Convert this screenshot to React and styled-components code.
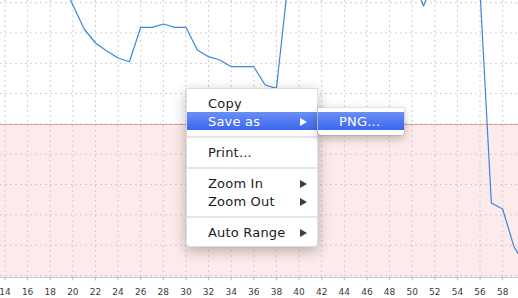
import React from 'react';
import styled, { createGlobalStyle } from 'styled-components';

const GlobalStyle = createGlobalStyle`
  html, body {
    margin: 0;
    padding: 0;
    background: #fff;
    overflow: hidden;
  }
`;

const W = 518;
const PLOT_BOTTOM = 277.5;
const BAND_TOP = 124;

const xOf = v => 5 + (v - 14) * 11.31;

// y values in screen pixels, index = x value
const series = [
  [19, -20], [20, 5], [21, 29], [22, 43], [23, 51], [24, 58], [25, 61.7],
  [26, 27.3], [27, 27.3], [28, 24], [29, 27.3], [30, 27.3], [31, 50],
  [32, 56.7], [33, 60], [34, 66.7], [35, 66.7], [36, 66.7], [37, 85],
  [38, 88.3], [39, -15], [40, -40], [45, -60], [50, -25], [51, 6],
  [52, -22], [54, -40], [55, -30], [56, -9.4], [57, 203], [58, 209],
  [59, 246.7], [60, 265],
];

const ticks = [];
for (let v = 14; v <= 60; v += 2) ticks.push(v);

const rows = [];
for (let k = 0; k < 10; k += 1) rows.push(2.7 + 30.3 * k);

const Frame = styled.div`
  position: relative;
  width: ${W}px;
  height: 298px;
  overflow: hidden;
  font-family: "DejaVu Sans", "Liberation Sans", sans-serif;
`;

const ChartSvg = styled.svg`
  display: block;
`;

const Chart = () => (
  <ChartSvg width={W} height={298} viewBox={`0 0 ${W} 298`}>
    <rect x="0" y={BAND_TOP} width={W} height={PLOT_BOTTOM - BAND_TOP} fill="#fdeaea" />
    {rows.map(y => (
      <line key={y} x1="0" x2={W} y1={y} y2={y} stroke="#cfcfcf" strokeWidth="1" strokeDasharray="2 3" />
    ))}
    {ticks.map(v => (
      <line key={v} x1={xOf(v)} x2={xOf(v)} y1="0" y2={PLOT_BOTTOM} stroke="#cfcfcf" strokeWidth="1" strokeDasharray="2 3" />
    ))}
    <line x1="0" x2={W} y1={BAND_TOP + 0.5} y2={BAND_TOP + 0.5} stroke="#d6a6a6" strokeWidth="1.2" />
    <polyline
      points={series.map(([v, y]) => `${xOf(v)},${y}`).join(' ')}
      fill="none"
      stroke="#3b86d8"
      strokeWidth="1.2"
      strokeLinejoin="round"
    />
    <line x1="0" x2={W} y1={PLOT_BOTTOM} y2={PLOT_BOTTOM} stroke="#c8c8c8" strokeWidth="1" />
    {ticks.filter(v => xOf(v) < W).map(v => (
      <g key={`t${v}`}>
        <line x1={xOf(v)} x2={xOf(v)} y1={PLOT_BOTTOM} y2={PLOT_BOTTOM + 3} stroke="#bbb" strokeWidth="1" />
        <text
          x={xOf(v)}
          y="295"
          textAnchor="middle"
          fontFamily="DejaVu Sans, sans-serif"
          fontSize="9"
          fill="#3a3a3a"
        >
          {v}
        </text>
      </g>
    ))}
  </ChartSvg>
);

const Menu = styled.ul`
  position: absolute;
  left: 186px;
  top: 88px;
  width: 130px;
  margin: 0;
  padding: 5px 0 5px;
  list-style: none;
  background: #fff;
  border: 1px solid rgba(0, 0, 0, 0.13);
  border-radius: 0 0 4px 4px;
  box-shadow: 0 4px 14px rgba(0, 0, 0, 0.28);
`;

const Item = styled.li`
  position: relative;
  display: flex;
  align-items: center;
  justify-content: space-between;
  height: 18px;
  padding: 0 10px 0 21px;
  font-size: 13px;
  letter-spacing: 0.2px;
  color: ${p => (p.$active ? '#fff' : '#1c1c1c')};
  background: ${p => (p.$active ? 'linear-gradient(#6a8ff5, #3b67ea)' : 'transparent')};
  white-space: nowrap;
`;

const Separator = styled.li`
  height: 13px;
  display: flex;
  align-items: center;
  &::after {
    content: '';
    flex: 1;
    height: 2px;
    background: #e4e4e4;
  }
`;

const Arrow = styled.span`
  width: 0;
  height: 0;
  border-top: 4.5px solid transparent;
  border-bottom: 4.5px solid transparent;
  border-left: 7px solid ${p => (p.$light ? '#fff' : '#3d3d3d')};
  margin-top: 1px;
`;

const SubMenu = styled.ul`
  position: absolute;
  left: calc(100% + 1px);
  top: -4.5px;
  width: 86px;
  margin: 0;
  padding: 4.5px 0 5px;
  list-style: none;
  background: #fff;
  border-radius: 0 0 3px 3px;
  box-shadow: 0 3px 10px rgba(0, 0, 0, 0.28), 0 0 0 1px rgba(0, 0, 0, 0.06);
`;

const ContextMenu = () => (
  <Menu>
    <Item>Copy</Item>
    <Item $active>
      Save as
      <Arrow $light />
      <SubMenu>
        <Item $active>PNG...</Item>
      </SubMenu>
    </Item>
    <Separator />
    <Item>Print...</Item>
    <Separator />
    <Item>
      Zoom In
      <Arrow />
    </Item>
    <Item>
      Zoom Out
      <Arrow />
    </Item>
    <Separator />
    <Item>
      Auto Range
      <Arrow />
    </Item>
  </Menu>
);

const App = () => (
  <Frame>
    <GlobalStyle />
    <Chart />
    <ContextMenu />
  </Frame>
);

export default App;
